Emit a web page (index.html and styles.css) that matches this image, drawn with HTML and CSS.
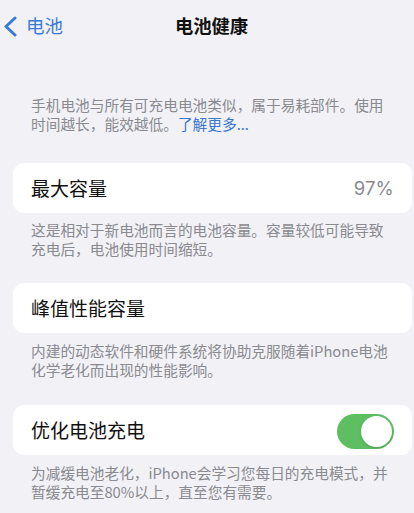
FILE: index.html
```html
<!DOCTYPE html>
<html lang="zh-CN">
<head>
<meta charset="utf-8">
<title>电池健康</title>
<link rel="stylesheet" href="styles.css">
</head>
<body>
<div class="page">
  <header class="nav">
    <div class="back">
      <svg class="chev" width="16" height="22" viewBox="0 0 16 22"><path d="M13 3 L4 11.5 L13 20" fill="none" stroke="#3a7bd5" stroke-width="3" stroke-linecap="round" stroke-linejoin="round"/></svg>
      <span class="back-text">电池</span>
    </div>
    <h1 class="title">电池健康</h1>
    <div class="spacer"></div>
  </header>

  <p class="note intro">手机电池与所有可充电电池类似，属于易耗部件。使用时间越长，能效越低。<span class="link">了解更多...</span></p>

  <section class="group g1">
    <div class="card">
      <span class="label">最大容量</span>
      <span class="value">97%</span>
    </div>
    <p class="note">这是相对于新电池而言的电池容量。容量较低可能导致充电后，电池使用时间缩短。</p>
  </section>

  <section class="group g2">
    <div class="card">
      <span class="label">峰值性能容量</span>
    </div>
    <p class="note">内建的动态软件和硬件系统将协助克服随着iPhone电池化学老化而出现的性能影响。</p>
  </section>

  <section class="group g3">
    <div class="card">
      <span class="label">优化电池充电</span>
      <span class="toggle"><span class="knob"></span></span>
    </div>
    <p class="note">为减缓电池老化，iPhone会学习您每日的充电模式，并暂缓充电至80%以上，直至您有需要。</p>
  </section>
</div>
</body>
</html>
```

FILE: styles.css
```css
* { box-sizing: border-box; }
html, body {
  margin: 0;
  padding: 0;
  background: #f1f1f6;
}
body {
  font-family: "Noto Sans CJK SC", "Noto Sans", sans-serif;
  color: #111;
  width: 414px;
  height: 513px;
  overflow: hidden;
}
.page {
  display: flex;
  flex-direction: column;
}
.nav {
  height: 50px;
  display: grid;
  grid-template-columns: 1fr auto 1fr;
  align-items: center;
}
.back {
  display: flex;
  align-items: center;
  padding-left: 2px;
  gap: 8px;
  color: #3a7bd5;
}
.chev { display: block; margin-top: 1px; }
.back-text {
  font-size: 18.5px;
  line-height: 22px;
}
.title {
  margin: 0;
  font-size: 18.3px;
  font-weight: 700;
  line-height: 22px;
  padding-left: 9px;
  color: #111;
}
.note {
  margin: 0;
  padding: 0 21px 0 31px;
  font-size: 14.7px;
  line-height: 18.5px;
  color: #8a8a8f;
}
.intro {
  margin-top: 46px;
}
.link { color: #3a78cf; }
.group {
  display: flex;
  flex-direction: column;
}
.g1 { margin-top: 30px; }
.g2 { margin-top: 25px; }
.g3 { margin-top: 26px; }
.group .note { margin-top: 8px; }
.g2 .note { margin-top: 9px; }
.g3 .note { margin-top: 9px; }
.card {
  margin: 0 2px 0 13px;
  height: 50px;
  background: #ffffff;
  border-radius: 11px;
  display: flex;
  align-items: center;
  justify-content: space-between;
  padding: 0 18px;
}
.label {
  font-size: 19px;
  line-height: 24px;
  color: #111;
}
.value {
  font-family: "Inter", "Noto Sans", sans-serif;
  font-size: 18.5px;
  color: #8a8a8f;
  letter-spacing: 0.2px;
}
.toggle {
  position: relative;
  width: 57px;
  height: 35px;
  border-radius: 18px;
  background: #5dbf62;
  margin-top: 2px;
}
.knob {
  position: absolute;
  top: 2px;
  right: 2px;
  width: 31px;
  height: 31px;
  border-radius: 50%;
  background: #fff;
  box-shadow: 0 1px 3px rgba(0,0,0,0.18);
}
```
